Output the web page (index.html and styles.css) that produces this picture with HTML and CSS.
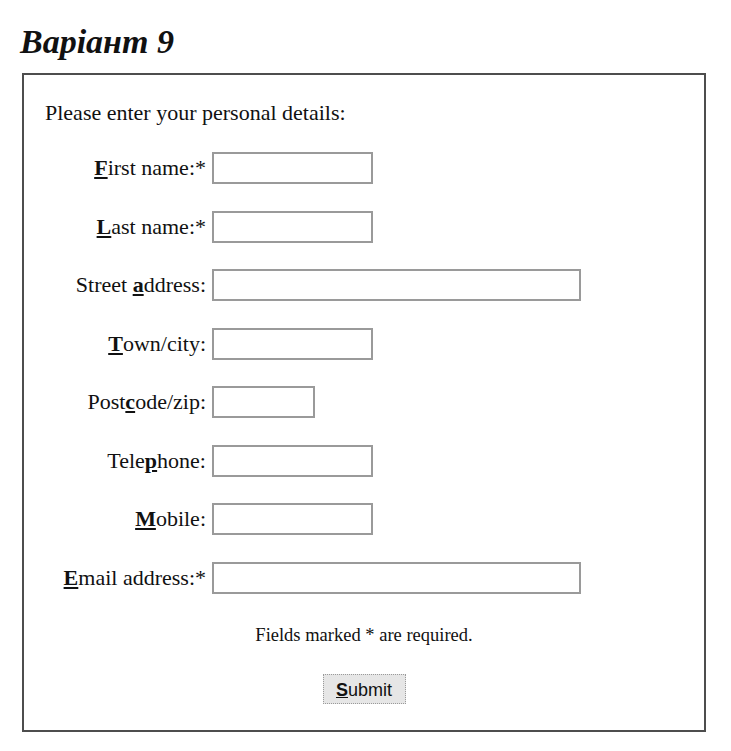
FILE: index.html
```html
<!DOCTYPE html>
<html>
<head>
<meta charset="utf-8">
<link rel="stylesheet" href="styles.css">
</head>
<body>
<h1 class="title">Варіант 9</h1>
<form class="panel">
  <p class="intro">Please enter your personal details:</p>
  <div class="fields">
    <label class="lbl"><u class="key">F</u>irst name:*</label><input class="inp w-md" type="text">
    <label class="lbl"><u class="key">L</u>ast name:*</label><input class="inp w-md" type="text">
    <label class="lbl">Street <u class="key">a</u>ddress:</label><input class="inp w-lg" type="text">
    <label class="lbl"><u class="key">T</u>own/city:</label><input class="inp w-md" type="text">
    <label class="lbl">Post<u class="key">c</u>ode/zip:</label><input class="inp w-sm" type="text">
    <label class="lbl">Tele<u class="key">p</u>hone:</label><input class="inp w-md" type="text">
    <label class="lbl"><u class="key">M</u>obile:</label><input class="inp w-md" type="text">
    <label class="lbl"><u class="key">E</u>mail address:*</label><input class="inp w-lg" type="text">
  </div>
  <p class="note">Fields marked * are required.</p>
  <div class="actions">
    <button class="btn" type="button"><u class="key">S</u>ubmit</button>
  </div>
</form>
</body>
</html>
```
FILE: styles.css
```css
html, body {
  margin: 0;
  padding: 0;
  background: #ffffff;
}
body {
  font-family: "Liberation Serif", "Times New Roman", serif;
  color: #111;
  width: 731px;
  height: 751px;
  overflow: hidden;
}
.title {
  margin: 0;
  padding: 24px 0 0 20px;
  height: 73px;
  box-sizing: border-box;
  font-size: 34px;
  line-height: 36px;
  font-weight: bold;
  font-style: italic;
}
.panel {
  margin: 0 0 0 22px;
  width: 680px;
  height: 655px;
  border: 2px solid #4d4d4d;
  display: flex;
  flex-direction: column;
}
.intro {
  margin: 0;
  padding: 25px 0 0 21px;
  font-size: 22px;
  line-height: 26px;
}
.fields {
  margin-top: 26px;
  display: grid;
  grid-template-columns: 182px 1fr;
  column-gap: 6px;
  row-gap: 26.5px;
  grid-auto-rows: 32px;
  align-items: center;
}
.lbl {
  text-align: right;
  font-size: 22px;
  line-height: 26px;
}
.key {
  font-weight: bold;
  text-decoration: underline;
}
.inp {
  height: 32px;
  box-sizing: border-box;
  border: 2px solid #9a9a9a;
  padding: 0;
  margin: 0;
  background: #fff;
}
.w-md { width: 161px; }
.w-lg { width: 369px; }
.w-sm { width: 103px; }
.note {
  margin: 30px 0 0 0;
  text-align: center;
  font-size: 18.5px;
  line-height: 22px;
}
.actions {
  margin-top: 28px;
  display: flex;
  justify-content: center;
}
.btn {
  width: 83px;
  height: 30px;
  border: 1px dotted #9a9a9a;
  background: #e6e6e6;
  font-family: "Liberation Sans", Arial, sans-serif;
  font-size: 18px;
  color: #111;
  padding: 3px 0 0 0;
}
```
